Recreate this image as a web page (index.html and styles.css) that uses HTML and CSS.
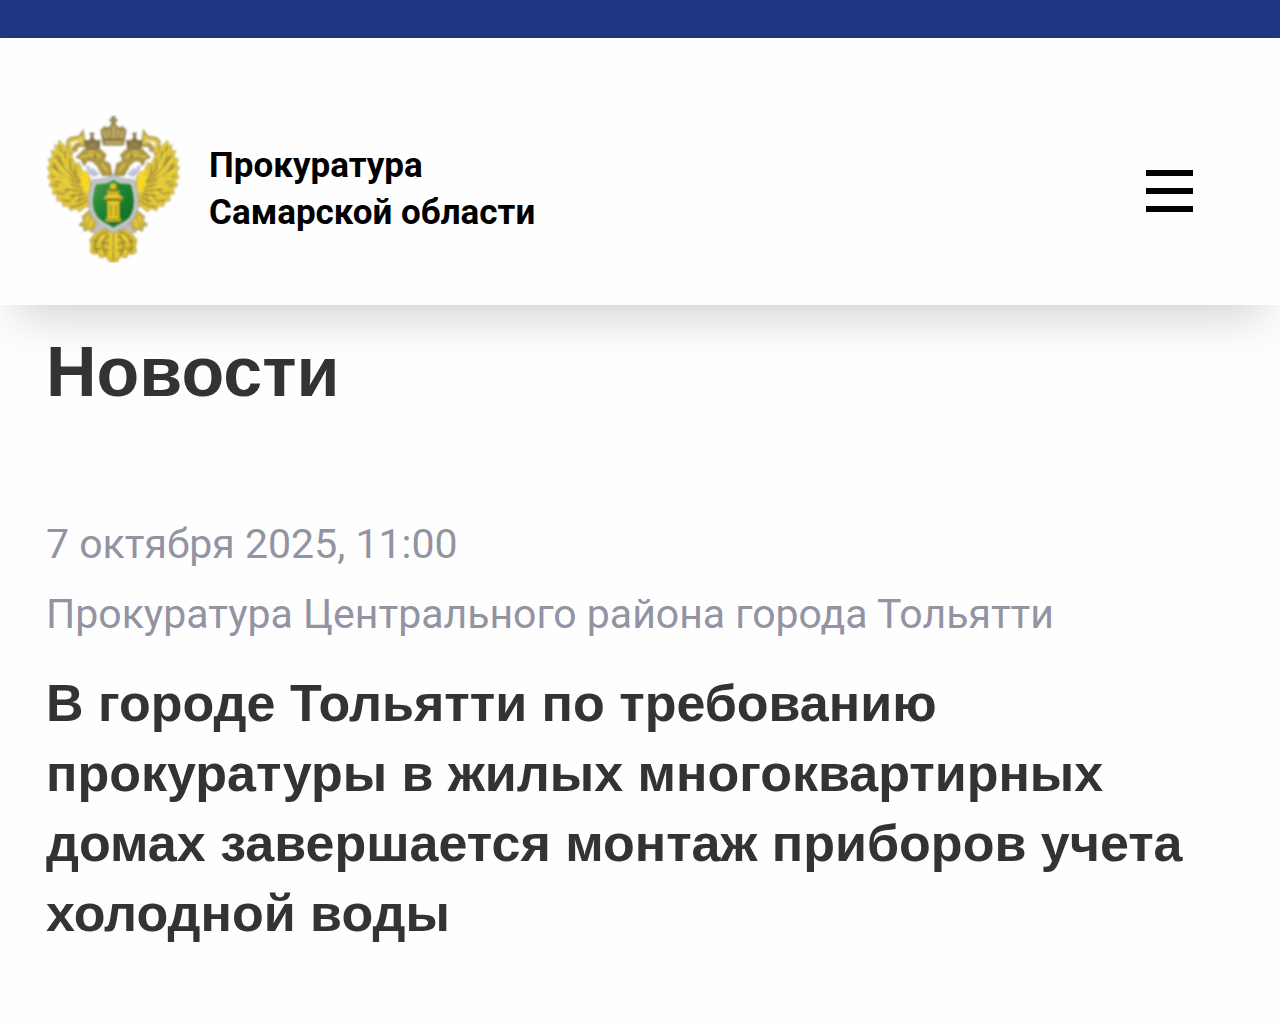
FILE: index.html
```html
<!DOCTYPE html>
<html lang="ru">
<head>
<meta charset="utf-8">
<meta name="viewport" content="width=device-width, initial-scale=1">
<title>Прокуратура Самарской области</title>
<link rel="stylesheet" href="styles.css">
</head>
<body>
<div class="topbar"></div>
<header class="header">
  <a class="brand" href="#">
    <svg class="emblem" viewBox="21 30 405 444" aria-hidden="true">
      <defs>
        <linearGradient id="shield" x1="0" y1="0" x2="1" y2="1">
          <stop offset="0" stop-color="#4aa04c"/>
          <stop offset=".45" stop-color="#1b8531"/>
          <stop offset="1" stop-color="#0b6724"/>
        </linearGradient>
        <filter id="soft" x="-5%" y="-5%" width="110%" height="110%"><feGaussianBlur stdDeviation="2.4"/></filter>
        <g id="half">
          <!-- wing -->
          <path fill="#e2c834" stroke="#b8a44c" stroke-width="3" d="M155 222 L144 202 L130 198 L119 172 L112 180 L98 154 L91 146 L88 131 L75 121 L60 106 L58 126 L48 118 L50 140 L37 136 L42 158 L28 162 L35 180 L25 187 L34 204 L26 216 L37 228 L30 242 L44 250 L40 266 L55 270 L53 287 L69 289 L72 304 L87 302 L94 317 L108 310 L122 320 L138 306 L154 304 Z"/>
          <g fill="none" stroke="#a08a3c" stroke-width="5">
            <path d="M142 235 C108 217 75 176 61 121M137 237 C100 220 68 190 49 150M133 241 C98 229 65 211 38 182M133 248 C98 242 67 231 36 211M134 257 C104 259 73 252 40 238M138 266 C114 274 83 273 52 262M142 275 C121 288 96 292 68 285M145 285 C131 299 112 306 94 305"/>
            <path d="M77 137 L80 177M93 160 L95 194M108 181 L111 210M59 151 L75 193M44 174 L68 217M67 231 L48 232M89 246 L78 268M107 257 L99 282M125 263 L119 294"/>
          </g>
          <g fill="none" stroke="#f4da46" stroke-width="5">
            <path d="M66 143 L90 191M48 165 L91 214M41 195 L92 226M48 219 L94 239M57 247 L99 247M75 272 L109 261M94 294 L121 275"/>
          </g>
          <path fill="#f8d828" d="M148 207 L126 195 L130 216 L117 212 L127 230 L120 241 L132 246 L131 258 L147 262 L156 284Z"/>
          <!-- ribbon -->
          <path fill="none" stroke="#b09c50" stroke-width="15" d="M92 147 C106 136 80 122 91 108 C101 96 119 108 129 92 L133 119 C118 116 109 120 106 140"/>
          <path fill="none" stroke="#e8cf44" stroke-width="8" d="M92 143 C104 133 84 121 94 109 C104 101 119 108 128 98 L130 117"/>
          <!-- neck and head -->
          <path fill="#ae9841" stroke="#8b7b46" stroke-width="3" d="M137 132 L182 132 L201 149 L194 167 L212 176 L219 210 L191 212 L176 184 L160 168 L145 167 L135 182 L127 163 L112 157 Z"/>
          <path fill="none" stroke="#d9c052" stroke-width="6" d="M124 156 L155 150 L177 158M171 145 L186 158 M188 176 L206 199M147 142 L166 140"/>
          <circle cx="169" cy="155" r="4" fill="#6c5c33"/>
          <path fill="none" stroke="#c0c1d3" stroke-width="10" d="M144 182 L153 203 L169 213M157 192 L178 210"/>
          <!-- side crown -->
          <path fill="#857343" stroke="#6f6243" stroke-width="3" d="M142 130 L137 106 L149 108 L156 100 L157 91 L153 85 L165 85 L161 92 L163 101 L172 108 L183 106 L180 130 Z"/>
          <path d="M145 125 H177 M149 115 L157 119 L170 115" stroke="#b09b60" stroke-width="3" fill="none"/>
          <!-- leg -->
          <path fill="#cbb137" stroke="#a08c50" stroke-width="3" d="M150 317 L129 335 L135 346 L120 360 L134 365 L136 379 L149 372 L160 384 L169 366 L183 372 L177 346 Z"/>
          <path d="M148 334 L140 352 M159 343 L151 367" stroke="#ead34b" stroke-width="6"/>
          <path fill="none" stroke="#bdbecd" stroke-width="10" d="M184 353 L164 386M193 366 L175 394"/>
          <!-- tail -->
          <path fill="#dcc02a" stroke="#b09a3c" stroke-width="3" d="M222 371 L180 376 L166 389 L153 404 L157 425 L154 440 L164 448 L177 444 L184 458 L203 454 L210 469 L222 471 Z"/>
          <path fill="none" stroke="#95813c" stroke-width="5" d="M207 381 C170 386 161 416 173 442M210 391 C188 404 187 430 202 451M164 407 L211 417M164 430 L212 437"/>
          <path fill="none" stroke="#f3da3a" stroke-width="5" d="M195 390 L178 415M187 432 L188 450M216 384 L213 455"/>
        </g>
      </defs>
      <g filter="url(#soft)">
        <use href="#half"/>
        <use href="#half" transform="matrix(-1 0 0 1 446 0)"/>
        <!-- main crown -->
        <path fill="#a38e50" stroke="#7f6f48" stroke-width="3" d="M193 120 L186 75 L197 65 L208 70 L218 58 L219 50 L211 45 L219 42 L220 34 L227 34 L228 42 L236 45 L228 50 L229 58 L239 70 L250 65 L261 75 L253 120 Z"/>
        <path fill="none" stroke="#cbb66e" stroke-width="5" d="M195 77 L201 101M252 77 L246 101M224 63 L224 101M198 112 H249M209 76 L211 94M238 76 L235 94"/>
        <path d="M190 104 H255" stroke="#6b5d42" stroke-width="4"/>
        <!-- shield -->
        <path fill="#c5c6cf" stroke="#9294a0" stroke-width="3" d="M223 209 C201 227 174 220 161 226 C148 260 143 303 160 335 C176 363 204 370 223 384 C243 370 271 363 287 335 C304 303 298 260 285 226 C272 220 245 227 223 209Z"/>
        <path fill="url(#shield)" stroke="#e0e5dc" stroke-width="3" d="M223 221 C202 238 181 231 168 236 C157 269 153 303 168 330 C181 352 205 359 223 371 C242 359 266 352 279 330 C293 303 289 269 278 236 C265 231 244 238 223 221Z"/>
        <!-- column -->
        <path fill="#e8c82b" d="M213 239 L222 235 L232 239 L229 248 L240 258 L238 265 L208 265 L205 258 L216 248Z M195 280 L207 267 L239 267 L252 280 L244 290 L240 292 L240 335 L247 349 L199 349 L206 335 L206 292Z"/>
        <path d="M199 284 H248M210 256 H236" stroke="#514f15" stroke-width="6"/>
        <path d="M216 298 V334M231 298 V334M204 343 H242" stroke="#8f8319" stroke-width="4"/>
      </g>
    </svg>
    <span class="brand-name">Прокуратура<br>Самарской области</span>
  </a>
  <button class="menu" type="button" aria-label="Меню">
    <span class="bar"></span><span class="bar"></span><span class="bar"></span>
  </button>
</header>
<main class="content">
  <h1 class="section-title">Новости</h1>
  <article>
    <p class="meta"><time datetime="2025-10-07T11:00">7 октября 2025, 11:00</time></p>
    <p class="meta">Прокуратура Центрального района города Тольятти</p>
    <h2 class="headline">В городе Тольятти по требованию прокуратуры в жилых многоквартирных домах завершается монтаж приборов учета холодной воды</h2>
  </article>
</main>
</body>
</html>
```
FILE: styles.css
```css
* {
  box-sizing: border-box;
}

body {
  margin: 0;
  background: #fefefe;
  color: #333;
  font-family: Roboto, sans-serif;
}

.topbar {
  height: 38px;
  background: #1d3782;
}

.header {
  position: relative;
  display: flex;
  align-items: center;
  justify-content: space-between;
  padding: 77px 80px 42px 46px;
  background: #fefefe;
  box-shadow: 0 24px 48px -16px rgba(0, 0, 0, .2);
}

.brand {
  display: flex;
  align-items: center;
  gap: 28px;
  color: #000;
  text-decoration: none;
}

.emblem {
  display: block;
  width: 135px;
  height: 148px;
}

.brand-name {
  font-size: 35px;
  font-weight: 700;
  line-height: 47px;
}

.menu {
  display: flex;
  flex-direction: column;
  gap: 12px;
  padding: 10px 7px 6px;
  border: 0;
  background: none;
}

.bar {
  width: 47px;
  height: 6px;
  background: #000;
}

.content {
  padding: 27px 46px 70px;
}

.section-title,
.headline {
  margin: 0;
  font-family: "Liberation Sans", Arial, sans-serif;
  font-weight: 700;
}

.section-title {
  margin-bottom: 97px;
  font-size: 70px;
  line-height: 80px;
}

.meta {
  margin: 0;
  color: #9293a3;
  font-size: 41px;
  line-height: 70px;
}

.headline {
  margin-top: 19px;
  font-size: 52px;
  line-height: 70px;
}
```
